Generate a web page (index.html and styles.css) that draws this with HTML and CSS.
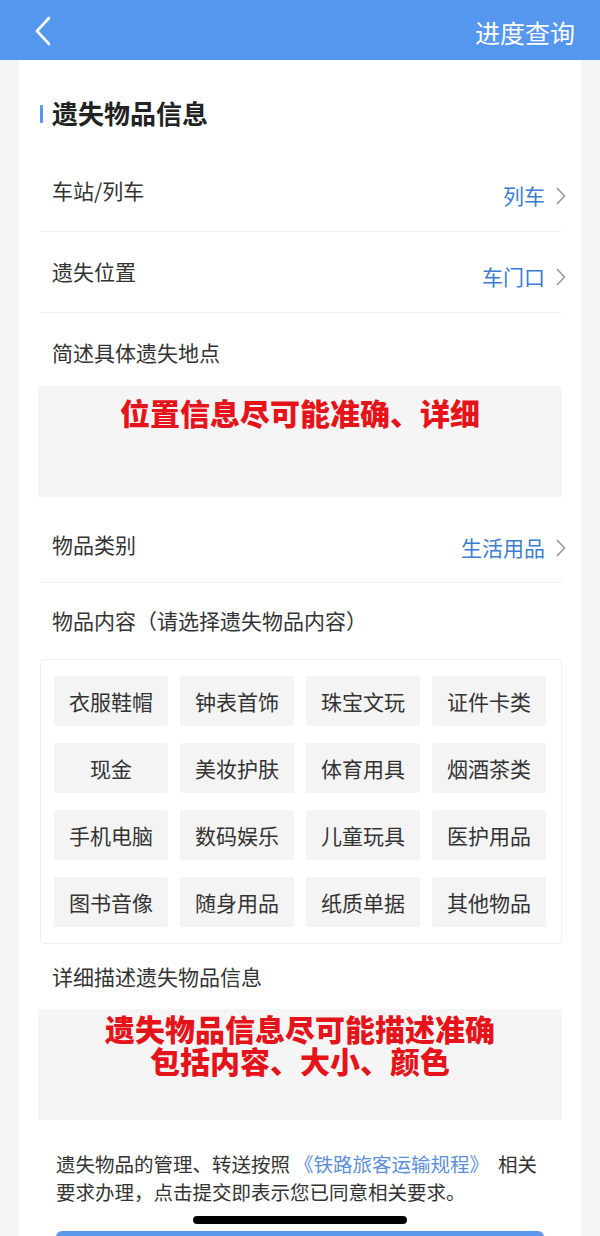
FILE: index.html
```html
<!DOCTYPE html>
<html lang="zh-CN">
<head>
<meta charset="utf-8">
<title>遗失物品信息</title>
<link rel="stylesheet" href="styles.css">
</head>
<body>
<div class="page">
  <header class="topbar">
    <svg class="back" width="20" height="30" viewBox="0 0 20 30"><polyline points="14,2 2,15 14,28" fill="none" stroke="#fff" stroke-width="2.6" stroke-linecap="round" stroke-linejoin="round"/></svg>
    <div class="topbar-title">进度查询</div>
  </header>
  <main class="card">
    <div class="section-title"><span class="bar"></span><span class="title-text">遗失物品信息</span></div>

    <div class="row">
      <span class="label">车站/列车</span>
      <span class="value">列车<svg class="chev" width="12" height="20" viewBox="0 0 12 20"><polyline points="2,2 9.5,10 2,18" fill="none" stroke="#9a9a9a" stroke-width="1.6"/></svg></span>
    </div>
    <div class="row">
      <span class="label">遗失位置</span>
      <span class="value">车门口<svg class="chev" width="12" height="20" viewBox="0 0 12 20"><polyline points="2,2 9.5,10 2,18" fill="none" stroke="#9a9a9a" stroke-width="1.6"/></svg></span>
    </div>

    <div class="field-label first">简述具体遗失地点</div>
    <div class="textarea one">
      <p class="note">位置信息尽可能准确、详细</p>
    </div>

    <div class="row tall">
      <span class="label">物品类别</span>
      <span class="value">生活用品<svg class="chev" width="12" height="20" viewBox="0 0 12 20"><polyline points="2,2 9.5,10 2,18" fill="none" stroke="#9a9a9a" stroke-width="1.6"/></svg></span>
    </div>

    <div class="field-label second">物品内容（请选择遗失物品内容）</div>
    <div class="chips">
      <div class="chip">衣服鞋帽</div>
      <div class="chip">钟表首饰</div>
      <div class="chip">珠宝文玩</div>
      <div class="chip">证件卡类</div>
      <div class="chip">现金</div>
      <div class="chip">美妆护肤</div>
      <div class="chip">体育用具</div>
      <div class="chip">烟酒茶类</div>
      <div class="chip">手机电脑</div>
      <div class="chip">数码娱乐</div>
      <div class="chip">儿童玩具</div>
      <div class="chip">医护用品</div>
      <div class="chip">图书音像</div>
      <div class="chip">随身用品</div>
      <div class="chip">纸质单据</div>
      <div class="chip">其他物品</div>
    </div>

    <div class="field-label third">详细描述遗失物品信息</div>
    <div class="textarea two">
      <p class="note">遗失物品信息尽可能描述准确<br>包括内容、大小、颜色</p>
    </div>

    <p class="agreement">遗失物品的管理、转送按照<span class="link">《铁路旅客运输规程》</span>相关要求办理，点击提交即表示您已同意相关要求。</p>
    <div class="submit"></div>
  </main>
  <div class="home-indicator"></div>
</div>
</body>
</html>
```
FILE: styles.css
```css
* { box-sizing: border-box; }
html, body { margin: 0; padding: 0; }
body {
  width: 600px;
  height: 1236px;
  overflow: hidden;
  background: #f4f4f4;
  font-family: "Noto Sans CJK SC", "Noto Sans", sans-serif;
  color: #333;
}
.page { position: relative; width: 600px; height: 1236px; overflow: hidden; }

.topbar {
  height: 60px;
  background: #5596ee;
  display: flex;
  align-items: center;
  justify-content: space-between;
  padding: 0 25px 0 35px;
}
.back { display: block; margin-top: 2px; }
.topbar-title { color: #fff; font-size: 25px; line-height: 30px; margin-top: 3px; }

.card {
  margin: 0 19px;
  background: #fff;
  padding: 0 19px;
  height: 1176px;
}

.section-title {
  height: 91px;
  padding-top: 38px;
  display: flex;
  align-items: flex-start;
}
.bar { width: 3px; height: 18px; background: #5596ee; margin: 7px 9px 0 2px; border-radius: 1px; }
.title-text { font-size: 26px; line-height: 30px; font-weight: 700; color: #222; }

.row {
  height: 81px;
  margin-left: 2px;
  border-bottom: 1px solid #efefef;
  display: flex;
  justify-content: space-between;
  align-items: flex-start;
  padding-left: 12px;
}
.label { font-size: 21px; line-height: 28px; margin-top: 25px; color: #333; }
.value {
  font-size: 21px; line-height: 28px; margin-top: 30px; color: #3c7dd2;
  display: flex; align-items: center; margin-right: -5px;
}
.chev { margin-left: 10px; margin-top: 1px; }
.row.tall { height: 86px; }
.row.tall .label { margin-top: 33px; }
.row.tall .value { margin-top: 36px; }

.field-label { font-size: 21px; line-height: 28px; padding-left: 14px; color: #333; }
.field-label.first { height: 73px; padding-top: 25px; }
.field-label.second { height: 76px; padding-top: 23px; }
.field-label.third { height: 65px; padding-top: 18px; }

.textarea {
  height: 111px;
  background: #f5f5f5;
  border-radius: 2px;
  text-align: center;
}
.textarea.one { padding-top: 10px; }
.textarea.two { padding-top: 3px; }
.note {
  margin: 0;
  color: #e5141b;
  font-size: 30px;
  line-height: 32px;
  font-weight: 900;
}

.chips {
  margin-left: 2px;
  border: 1px solid #f0f0f0;
  border-radius: 4px;
  padding: 16px 15px 16px 13px;
  display: grid;
  grid-template-columns: repeat(4, 114px);
  column-gap: 12px;
  row-gap: 17px;
}
.chip {
  height: 50px;
  background: #f4f4f4;
  border-radius: 2px;
  display: flex;
  align-items: center;
  justify-content: center;
  font-size: 21px;
  color: #333;
}

.agreement {
  margin: 0;
  padding: 30px 18px 0 18px;
  font-size: 19.5px;
  line-height: 28px;
  color: #333;
}
.link { color: #5b8fd8; margin: 0 9px 0 4px; }

.submit {
  margin: 25px 18px 0;
  height: 50px;
  background: #5b99ee;
  border-radius: 6px;
}

.home-indicator {
  position: absolute;
  left: 193px;
  top: 1216px;
  width: 214px;
  height: 8px;
  border-radius: 4px;
  background: #000;
}
```
